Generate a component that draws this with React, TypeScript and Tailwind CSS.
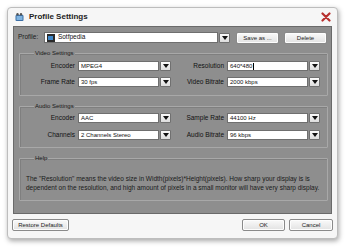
import React from "react";

const F = { fontFamily: '"Liberation Sans", Arial, sans-serif' };

function Arrow() {
  return (
    <div className="w-[11px] h-[10px] border border-[#707070] rounded-[1px] bg-gradient-to-b from-[#fbfbfb] to-[#dcdcdc] flex items-center justify-center shrink-0">
      <svg width="6" height="4" viewBox="0 0 6 4"><path d="M0 0H6L3 4Z" fill="#111" /></svg>
    </div>
  );
}

function Select({ value, w, cursor }: { value: string; w: number; cursor?: boolean }) {
  return (
    <div className="flex items-center gap-[1px]">
      <div style={{ width: w }} className="h-[10px] bg-white border border-[#6f6f6f] flex items-center pl-[2px] text-[6px] text-[#111] leading-none">
        {value}
        {cursor && <span className="inline-block w-[1px] h-[7px] bg-black ml-[1px]" />}
      </div>
      <Arrow />
    </div>
  );
}

function Btn({ children, w }: { children: React.ReactNode; w: number }) {
  return (
    <div style={{ width: w }} className="h-[12px] rounded-[2px] border border-[#8a8a8a] bg-gradient-to-b from-[#fafafa] to-[#e2e2e2] flex items-center justify-center text-[6px] text-[#222] leading-none shadow-[inset_0_0_0_1px_#fdfdfd]">
      {children}
    </div>
  );
}

function Group({ title, children, h }: { title: string; children: React.ReactNode; h: number }) {
  return (
    <div style={{ height: h }} className="relative border border-[#a8a8a8] rounded-[1px] shadow-[inset_1px_1px_0_#7f7f7f]">
      <div className="absolute left-[14px] top-[-5px] px-[1px] bg-[#8e8e8e] text-[6px] leading-[8px] text-[#1a1a1a]">{title}</div>
      {children}
    </div>
  );
}

function Row({ l1, v1, l2, v2, cursor }: { l1: string; v1: string; l2: string; v2: string; cursor?: boolean }) {
  return (
    <div className="flex items-center h-[10px]">
      <div className="w-[55px] text-right text-[6.5px] text-[#111] leading-none">{l1}</div>
      <div className="w-[3px]" />
      <Select value={v1} w={81} />
      <div className="w-[53px] text-right text-[6.5px] text-[#111] leading-none">{l2}</div>
      <div className="w-[3px]" />
      <Select value={v2} w={81} cursor={cursor} />
    </div>
  );
}

export default function App() {
  return (
    <div style={F} className="w-[350px] h-[251px] bg-white pt-[7px] pl-[7px]">
      <div className="w-[331px] h-[232px] bg-[#f6f6f6] border border-[#bdbdbd] rounded-[4px] shadow-[1px_2px_5px_rgba(0,0,0,0.35)] flex flex-col">
        <div className="h-[18px] flex items-center pl-[7px] pr-[6px]">
          <svg width="9" height="8" viewBox="0 0 9 8">
            <rect x="0.5" y="2" width="8" height="6" rx="1" fill="#3b6ea5" />
            <rect x="1.5" y="3" width="6" height="4" fill="#7fb3e0" />
            <circle cx="2.5" cy="1.2" r="1.2" fill="#555" />
            <circle cx="6" cy="1.2" r="1.2" fill="#555" />
          </svg>
          <div className="ml-[5px] text-[8px] font-bold text-[#222] leading-none">Profile Settings</div>
          <div className="ml-auto">
            <svg width="10" height="10" viewBox="0 0 10 10">
              <path d="M1.5 1.5L8.5 8.5M8.5 1.5L1.5 8.5" stroke="#b8312f" strokeWidth="2.2" strokeLinecap="round" />
            </svg>
          </div>
        </div>
        <div className="mx-[5px] h-[188px] bg-[#8e8e8e] border border-[#6a6a6a] px-[4px] pt-[5px] flex flex-col">
          <div className="flex items-center h-[11px]">
            <div className="w-[26px] text-[6.5px] text-[#1a1a1a] leading-none">Profile:</div>
            <div className="w-[175px] h-[11px] bg-white border border-[#6f6f6f] flex items-center pl-[2px] gap-[3px]">
              <div className="w-[8px] h-[8px] bg-[#2a2a2a] flex items-center justify-center">
                <div className="w-[5px] h-[4px] bg-[#3d86c8]" />
              </div>
              <span className="text-[6.5px] text-[#111] leading-none">Sotfpedia</span>
            </div>
            <div className="ml-[1px]"><Arrow /></div>
            <div className="ml-[6px]"><Btn w={43}>Save as ...</Btn></div>
            <div className="ml-[5px]"><Btn w={43}>Delete</Btn></div>
          </div>
          <div className="mt-[10px] ml-[1px] w-[309px] flex flex-col gap-[10px]">
            <Group title="Video Settings" h={43}>
              <div className="flex flex-col gap-[6px] pt-[7px]">
                <Row l1="Encoder" v1="MPEG4" l2="Resolution" v2="640*480" cursor />
                <Row l1="Frame Rate" v1="30 fps" l2="Video Bitrate" v2="2000 kbps" />
              </div>
            </Group>
            <Group title="Audio Settings" h={42}>
              <div className="flex flex-col gap-[7px] pt-[6px]">
                <Row l1="Encoder" v1="AAC" l2="Sample Rate" v2="44100 Hz" />
                <Row l1="Channels" v1="2 Channels Stereo" l2="Audio Bitrate" v2="96 kbps" />
              </div>
            </Group>
            <Group title="Help" h={43}>
              <div className="pt-[15px] pl-[6px] text-[6.5px] leading-[9px] text-[#1a1a1a] whitespace-nowrap">
                The "Resolution" means the video size in Width(pixels)*Height(pixels). How sharp your display is is
                <br />
                dependent on the resolution, and high amount of pixels in a small monitor will have very sharp display.
              </div>
            </Group>
          </div>
        </div>
        <div className="flex items-center pl-[4px] pr-[4px] mt-[5px]">
          <Btn w={57}>Restore Defaults</Btn>
          <div className="ml-auto"><Btn w={43}>OK</Btn></div>
          <div className="ml-[4px]"><Btn w={44}>Cancel</Btn></div>
        </div>
      </div>
    </div>
  );
}
